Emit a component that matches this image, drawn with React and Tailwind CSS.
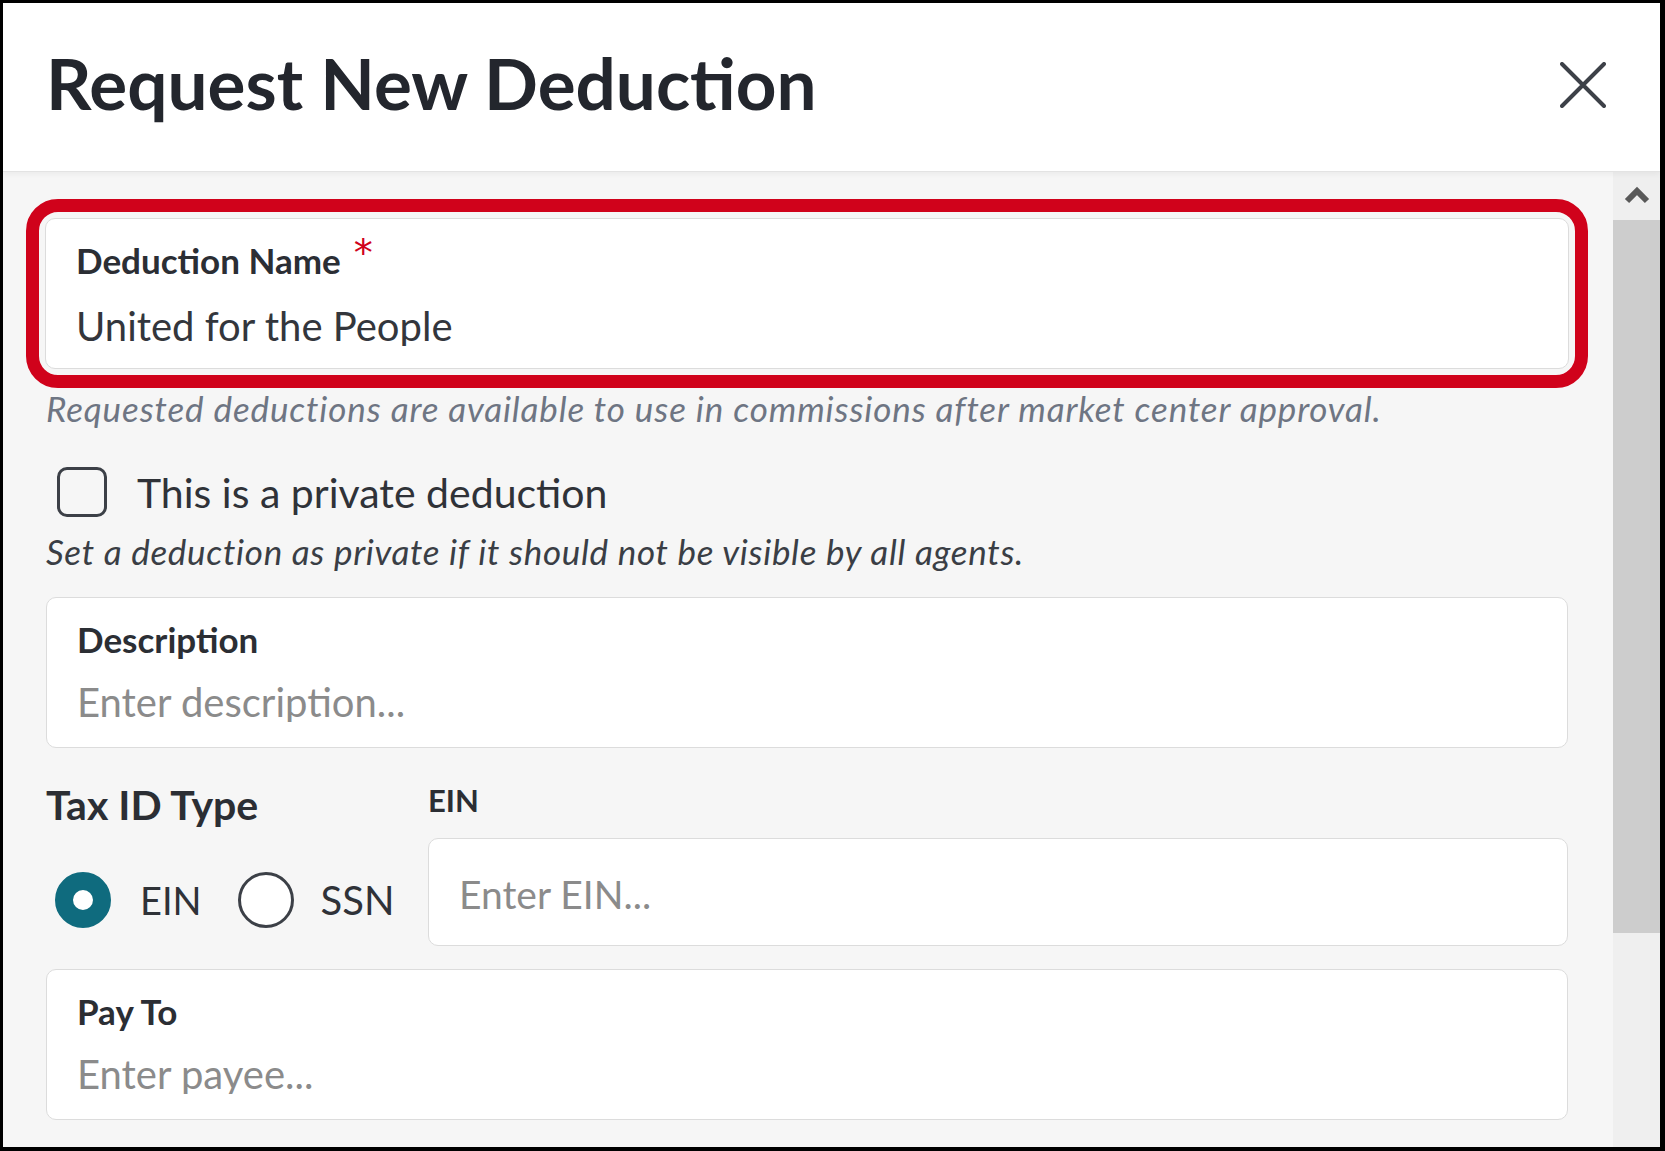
import React, { useState } from "react";

function CloseIcon() {
  return (
    <svg width="46" height="46" viewBox="0 0 46 46" fill="none">
      <path d="M2 2 L44 44 M44 2 L2 44" stroke="#3d4148" strokeWidth="4" strokeLinecap="round" />
    </svg>
  );
}

function ChevronUp() {
  return (
    <svg width="26" height="20" viewBox="0 0 26 20" fill="none">
      <path d="M3 16 L13 6 L23 16" stroke="#595959" strokeWidth="6" strokeLinejoin="miter" />
    </svg>
  );
}

function Field({ label, required, placeholder, defaultValue }) {
  return (
    <div className="h-[151px] rounded-[10px] border border-[#dcdcdc] bg-white px-[30px] pt-[24px]">
      <div className="flex items-start text-[35px] font-bold leading-none text-[#2b2e34]">
        {label}
        {required && (
          <span className="relative -top-[9px] ml-[13px] font-['DejaVu_Sans',sans-serif] text-[38px] font-normal leading-none text-[#d0021b]">
            *
          </span>
        )}
      </div>
      <input
        className="mt-[25px] h-[40px] w-full bg-transparent p-0 text-[40px] leading-none text-[#33363c] outline-none placeholder:text-[#8b8b8b]"
        placeholder={placeholder}
        defaultValue={defaultValue}
      />
    </div>
  );
}

export default function App() {
  const [isPrivate, setIsPrivate] = useState(false);
  const [taxType, setTaxType] = useState("EIN");

  return (
    <div className="flex h-[1151px] w-[1665px] flex-col overflow-hidden border-t-[3px] border-l-[3px] border-r-[5px] border-b-[4px] border-black bg-white font-['Lato',sans-serif]">
      {/* Header */}
      <div className="relative z-10 flex h-[169px] shrink-0 items-start border-b border-[#e3e3e3] bg-white pl-[43px] pr-[54px] pt-[44px] shadow-[0_2px_6px_rgba(0,0,0,0.05)]">
        <h1 className="text-[71px] font-bold leading-none text-[#23262d]">Request New Deduction</h1>
        <button className="ml-auto mt-[15px]">
          <CloseIcon />
        </button>
      </div>

      {/* Body */}
      <div className="flex min-h-0 flex-1">
        <div className="flex-1 overflow-hidden bg-[#f6f6f6] pl-[43px] pr-[45px] pt-[27px]">
          {/* Deduction name (highlighted) */}
          <div className="-mx-[20px] rounded-[32px] border-[13px] border-[#d0021b] p-[6px]">
            <Field label="Deduction Name" required defaultValue="United for the People" />
          </div>
          <p className="mt-[3px] text-[35px] italic leading-none tracking-[0.025em] text-[#6e7583]">
            Requested deductions are available to use in commissions after market center approval.
          </p>

          {/* Private checkbox */}
          <label className="mt-[41px] flex cursor-pointer items-center">
            <button
              onClick={() => setIsPrivate(!isPrivate)}
              className={`ml-[11px] h-[50px] w-[50px] shrink-0 rounded-[10px] border-[3px] border-[#3c4047] ${
                isPrivate ? "bg-[#0f6b7e]" : "bg-transparent"
              }`}
            />
            <span className="ml-[30px] text-[41px] leading-none text-[#2f3238]">This is a private deduction</span>
          </label>
          <p className="mt-[17px] text-[35px] italic leading-none tracking-[0.02em] text-[#3a3e45]">
            Set a deduction as private if it should not be visible by all agents.
          </p>

          {/* Description */}
          <div className="mt-[28px]">
            <Field label="Description" placeholder="Enter description..." />
          </div>

          {/* Tax ID */}
          <div className="flex">
            <div className="w-[382px] shrink-0 pt-[36px]">
              <div className="text-[41px] font-bold leading-none text-[#2b2e34]">Tax ID Type</div>
              <div className="mt-[47px] flex items-center">
                <button
                  onClick={() => setTaxType("EIN")}
                  className={`ml-[9px] h-[56px] w-[56px] shrink-0 rounded-full bg-white ${
                    taxType === "EIN" ? "border-[18px] border-[#0f6b7e]" : "border-[3px] border-[#3c4047]"
                  }`}
                />
                <span className="ml-[29px] text-[38px] leading-none text-[#2f3238]">EIN</span>
                <button
                  onClick={() => setTaxType("SSN")}
                  className={`ml-[36px] h-[56px] w-[56px] shrink-0 rounded-full bg-white ${
                    taxType === "SSN" ? "border-[18px] border-[#0f6b7e]" : "border-[3px] border-[#3c4047]"
                  }`}
                />
                <span className="ml-[27px] text-[40px] leading-none text-[#2f3238]">SSN</span>
              </div>
            </div>
            <div className="flex-1 pt-[37px]">
              <div className="text-[31px] font-bold leading-none text-[#2b2e34]">{taxType}</div>
              <div className="mt-[22px] flex h-[108px] items-center rounded-[10px] border border-[#dcdcdc] bg-white px-[30px]">
                <input
                  className="mt-[4px] h-[40px] w-full bg-transparent p-0 text-[39px] leading-none text-[#33363c] outline-none placeholder:text-[#8b8b8b]"
                  placeholder={`Enter ${taxType}...`}
                />
              </div>
            </div>
          </div>

          {/* Pay to */}
          <div className="mt-[23px]">
            <Field label="Pay To" placeholder="Enter payee..." />
          </div>
        </div>

        {/* Scrollbar */}
        <div className="flex w-[47px] shrink-0 flex-col bg-[#efefef]">
          <div className="flex h-[48px] items-center justify-center pb-[2px]">
            <ChevronUp />
          </div>
          <div className="h-[713px] bg-[#cdcdcd]" />
        </div>
      </div>
    </div>
  );
}
